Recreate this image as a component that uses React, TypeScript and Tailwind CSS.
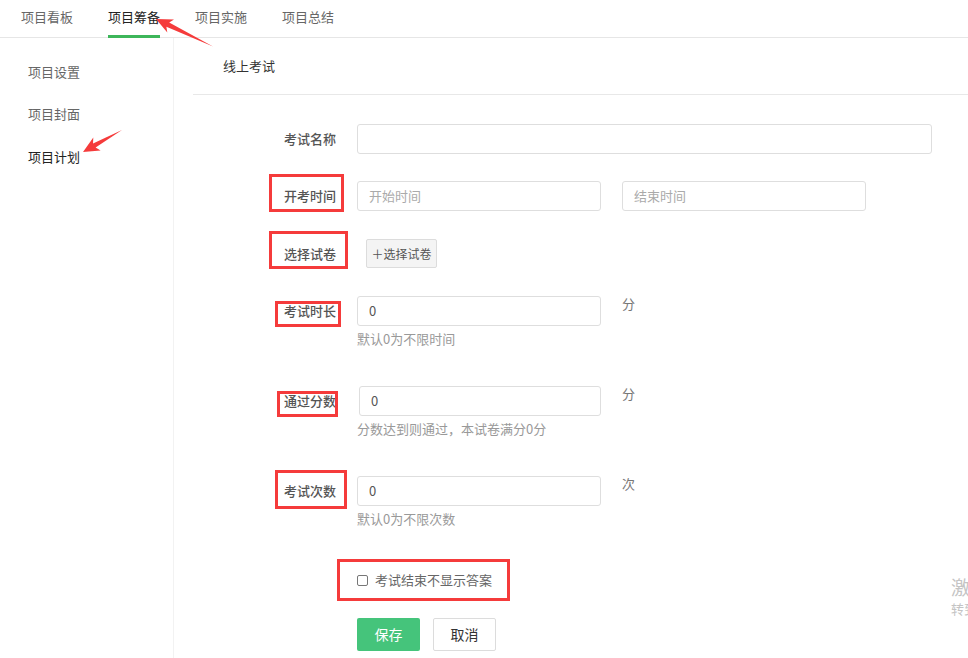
import React from 'react'

const tabs = ['项目看板', '项目筹备', '项目实施', '项目总结']
const sideItems = ['项目设置', '项目封面', '项目计划']

// red annotation boxes drawn over the form
const marks = [
  { id: 'time', cls: 'left-[269px] top-[174px] w-[75px] h-[38px]' },
  { id: 'paper', cls: 'left-[269px] top-[231px] w-[79px] h-[38px]' },
  { id: 'dur', cls: 'left-[275px] top-[301px] w-[66px] h-[26px]' },
  { id: 'pass', cls: 'left-[277px] top-[391px] w-[61px] h-[26px]' },
  { id: 'times', cls: 'left-[275px] top-[470px] w-[72px] h-[39px]' },
  { id: 'ans', cls: 'left-[337px] top-[559px] w-[173px] h-[42px]' },
]

function Label({ children, h = 'leading-[30px]' }: { children: React.ReactNode; h?: string }) {
  return (
    <div className={`w-[143px] shrink-0 text-right text-[#555] font-medium ${h}`}>
      {children}
    </div>
  )
}

function Input({
  value,
  placeholder,
  className = 'w-[244px]',
}: {
  value?: string
  placeholder?: string
  className?: string
}) {
  return (
    <div
      className={`h-[30px] rounded-[3px] border border-[#dedede] bg-white px-[11px] leading-[28px] ${className}`}
    >
      {value ? (
        <span className="text-[#555]">{value}</span>
      ) : (
        <span className="text-[#aaa]">{placeholder}</span>
      )}
    </div>
  )
}

function NumberRow({
  label,
  unit,
  hint,
  mt,
  shift = false,
}: {
  label: string
  unit: string
  hint: string
  mt: string
  shift?: boolean
}) {
  return (
    <div className={`flex ${mt}`}>
      <Label>{label}</Label>
      <div className="ml-[21px] flex flex-col">
        <div className="flex items-start">
          <Input value="0" className={shift ? 'ml-[2px] w-[242px]' : 'w-[244px]'} />
          <span className="ml-[21px] leading-[16px] text-[#777]">{unit}</span>
        </div>
        <div className="mt-[4px] leading-[18px] text-[#999]">{hint}</div>
      </div>
    </div>
  )
}

export default function App() {
  return (
    <div className="relative h-[658px] w-[968px] overflow-hidden bg-white font-['Noto_Sans_CJK_SC',sans-serif] text-[13px] text-[#333]">
      {/* top tabs */}
      <div className="flex h-[38px] gap-[35px] border-b border-[#e6e6e6] pl-[21px]">
        {tabs.map((t, i) => (
          <div
            key={t}
            className={`relative flex items-center pb-[3px] ${i === 1 ? 'text-[#222]' : 'text-[#666]'}`}
          >
            {t}
            {i === 1 && (
              <span className="absolute bottom-[-1px] left-0 right-0 h-[3px] bg-[#3db65a]" />
            )}
          </div>
        ))}
      </div>

      <div className="flex h-[620px]">
        {/* sidebar */}
        <aside className="w-[174px] shrink-0 border-r border-[#f2f2f2] pl-[28px] pt-[12px]">
          {sideItems.map((s, i) => (
            <div
              key={s}
              className={`flex h-[42.5px] items-center ${i === 2 ? 'text-[#222]' : 'text-[#666]'}`}
            >
              {s}
            </div>
          ))}
        </aside>

        {/* main */}
        <main className="flex-1 pl-[19px]">
          <div className="flex h-[57px] items-center border-b border-[#e8e8e8] pl-[30px] text-[#333]">
            线上考试
          </div>

          <div className="flex flex-col">
            <div className="mt-[29px] flex">
              <Label>考试名称</Label>
              <div className="ml-[21px]">
                <Input className="w-[575px]" />
              </div>
            </div>

            <div className="mt-[27px] flex">
              <Label>开考时间</Label>
              <div className="ml-[21px] flex gap-[21px]">
                <Input placeholder="开始时间" />
                <Input placeholder="结束时间" />
              </div>
            </div>

            <div className="mt-[28px] flex">
              <Label h="leading-[29px]">选择试卷</Label>
              <div className="ml-[30px]">
                <button className="h-[29px] w-[71px] rounded-[2px] border border-[#dcdcdc] bg-[#f4f4f4] text-[12px] leading-[27px] text-[#555]">
                  ＋选择试卷
                </button>
              </div>
            </div>

            <NumberRow label="考试时长" unit="分" hint="默认0为不限时间" mt="mt-[28px]" />
            <NumberRow
              label="通过分数"
              unit="分"
              hint="分数达到则通过，本试卷满分0分"
              mt="mt-[38px]"
              shift
            />
            <NumberRow label="考试次数" unit="次" hint="默认0为不限次数" mt="mt-[38px]" />

            <div className="ml-[164px] mt-[43px] flex h-[18px] items-center">
              <span className="h-[11px] w-[11px] rounded-[2px] border border-[#777] bg-white" />
              <span className="ml-[7px] text-[#666]">考试结束不显示答案</span>
            </div>

            <div className="ml-[164px] mt-[29px] flex gap-[13px]">
              <button className="h-[33px] w-[63px] rounded-[2px] bg-[#45c47b] text-[14px] text-white">
                保存
              </button>
              <button className="h-[33px] w-[63px] rounded-[2px] border border-[#dcdcdc] bg-white text-[14px] text-[#333]">
                取消
              </button>
            </div>
          </div>
        </main>
      </div>

      {/* annotation boxes */}
      {marks.map((m) => (
        <div key={m.id} className={`pointer-events-none absolute border-[3px] border-[#f53b3b] ${m.cls}`} />
      ))}

      {/* annotation arrows */}
      <svg className="pointer-events-none absolute left-0 top-0" width="968" height="658">
        <polygon
          fill="#f53b3b"
          points="156,19 174,19.4 169.2,22.6 213,46.5 166.4,26.8 167.3,32.6"
        />
        <polygon
          fill="#f53b3b"
          points="83,152 100.6,150.4 95.6,147.6 122,130 93,143.4 93.3,137.6"
        />
      </svg>

      {/* windows activation watermark, clipped at edge */}
      <div className="pointer-events-none absolute left-[951px] top-[576px] flex flex-col gap-[3px] whitespace-nowrap text-[#c4c4c4]">
        <div className="text-[19px] leading-[22px]">激活 Windows</div>
        <div className="text-[13px] leading-[16px]">转到“设置”以激活 Windows。</div>
      </div>
    </div>
  )
}
